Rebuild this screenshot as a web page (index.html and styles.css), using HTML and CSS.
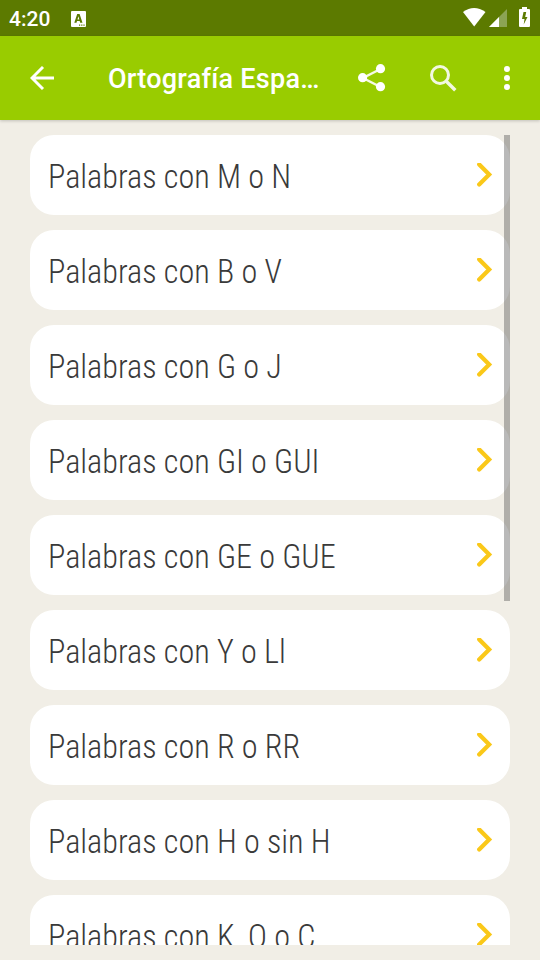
FILE: index.html
```html
<!DOCTYPE html>
<html lang="es">
<head>
<meta charset="utf-8">
<title>Ortografía Española</title>
<link rel="stylesheet" href="styles.css">
</head>
<body>
<svg class="defs" width="0" height="0">
  <symbol id="chevron" viewBox="0 0 16 24"><path d="M2.200 1.400 12.200 11.400 2.200 21.400" fill="none" stroke="#fac819" stroke-width="4.200" stroke-linecap="round"/></symbol>
</svg>
<div class="status">
  <span class="time">4:20</span>
  <svg class="note" width="15" height="16" viewBox="0 0 15 16"><path fill="#fff" d="M1 0h13a1 1 0 0 1 1 1v14a1 1 0 0 1-1 1H1a1 1 0 0 1-1-1V1a1 1 0 0 1 1-1z"/><path fill="#5c7a00" fill-rule="evenodd" d="M6.200 3h2.400l2.900 8.800H9.200L8.700 10H6l-.5 1.800H3.300zM7.400 5.200 6.500 8.400h1.800z"/><path fill="#5c7a00" d="M8 13.500h1.200v1.200H8zM10.200 13.500h1.200v1.200h-1.200zM12.400 13.500h1.200v1.200h-1.200z"/></svg>
  <svg class="sysicons" width="68" height="20" viewBox="0 0 68 20">
    <path fill="#fff" d="M0 5Q11-3 22.500 5L11.200 19.500z"/>
    <path fill="#8ca454" d="M44 2v18H26z"/>
    <path fill="#fff" d="M36 10v10H26z"/>
    <path fill="#fff" fill-rule="evenodd" d="M57 2h2V0h5v2h2a1 1 0 0 1 1 1v16a1 1 0 0 1-1 1h-9a1 1 0 0 1-1-1V3a1 1 0 0 1 1-1zM60.500 5 59 12h2.500l-.8 5.500 3.800-7.500h-2.300l1-5z"/>
  </svg>
</div>
<header class="bar">
  <svg class="back" width="24" height="24" viewBox="0 0 24 24"><path d="M13 1 2 12l11 11M2 12h22" fill="none" stroke="#fff" stroke-width="2.900"/></svg>
  <h1>Ortografía Espa…</h1>
  <svg class="share" width="28" height="28" viewBox="0 0 28 28"><path d="M22.500 5 5 14l17.500 9" fill="none" stroke="#fff" stroke-width="2.500" opacity=".9"/><g fill="#fff"><circle cx="22.500" cy="4.700" r="4.600"/><circle cx="4.600" cy="13.700" r="4.600"/><circle cx="22.500" cy="22.700" r="4.600"/></g></svg>
  <svg class="search" width="27" height="27" viewBox="0 0 27 27"><g fill="none" stroke="#fff" opacity=".88"><circle cx="10" cy="10" r="8.500" stroke-width="3"/><path d="M16.500 16.500 25.300 25.300" stroke-width="3.400"/></g></svg>
  <svg class="more" width="6" height="24" viewBox="0 0 6 24" fill="#fff"><circle cx="3" cy="3" r="3"/><circle cx="3" cy="12" r="3"/><circle cx="3" cy="21" r="3"/></svg>
</header>
<main class="list">
  <div class="row"><span>Palabras con M o N</span><svg class="chev"><use href="#chevron"/></svg></div>
  <div class="row"><span>Palabras con B o V</span><svg class="chev"><use href="#chevron"/></svg></div>
  <div class="row"><span>Palabras con G o J</span><svg class="chev"><use href="#chevron"/></svg></div>
  <div class="row"><span>Palabras con GI o GUI</span><svg class="chev"><use href="#chevron"/></svg></div>
  <div class="row"><span>Palabras con GE o GUE</span><svg class="chev"><use href="#chevron"/></svg></div>
  <div class="row"><span>Palabras con Y o Ll</span><svg class="chev"><use href="#chevron"/></svg></div>
  <div class="row"><span>Palabras con R o RR</span><svg class="chev"><use href="#chevron"/></svg></div>
  <div class="row"><span>Palabras con H o sin H</span><svg class="chev"><use href="#chevron"/></svg></div>
  <div class="row"><span>Palabras con K, Q o C</span><svg class="chev"><use href="#chevron"/></svg></div>
  <div class="thumb"></div>
</main>
</body>
</html>
```
FILE: styles.css
```css
* { box-sizing: border-box; }
body {
  margin: 0;
  height: 960px;
  overflow: hidden;
  display: flex;
  flex-direction: column;
  background: #f1eee6;
  font-family: Roboto, sans-serif;
}
svg { display: block; flex: none; }
.defs { position: absolute; }
.status {
  flex: none;
  height: 36px;
  display: flex;
  align-items: center;
  padding: 0 14px 0 9px;
  background: #5c7a00;
  color: #fff;
}
.time { width: 62px; font-size: 21px; font-weight: 500; line-height: 36px; padding-top: 1px; }
.note { margin-top: 1px; }
.sysicons { margin: -2px -5px 0 auto; }
.bar {
  flex: none;
  height: 84px;
  display: flex;
  align-items: center;
  padding-left: 30px;
  background: #99cc00;
  color: #fff;
  box-shadow: 0 1px 3px rgba(0, 0, 0, .2);
}
.bar h1 {
  margin: 2px 0 0 54px;
  width: 250px;
  font-size: 27px;
  font-weight: 500;
  letter-spacing: .25px;
  white-space: nowrap;
}
.search { margin-left: 44px; }
.more { margin-left: 47px; }
.list {
  position: relative;
  width: 480px;
  height: 810px;
  margin: 15px 0 0 30px;
  overflow: hidden;
  display: flex;
  flex-direction: column;
  gap: 15px;
}
.row {
  flex: none;
  height: 80px;
  display: flex;
  align-items: center;
  justify-content: space-between;
  padding: 0 17px 0 18px;
  border-radius: 24px;
  background: #fff;
  color: #3a3a3a;
  font-size: 34px;
  font-weight: 300;
  font-stretch: 75%;
  white-space: nowrap;
}
.row span {
  padding-top: 2px;
  transform: scaleX(.946);
  transform-origin: left center;
}
.chev { width: 16px; height: 24px; }
.thumb {
  position: absolute;
  top: 0;
  right: 0;
  width: 6px;
  height: 466px;
  background: rgba(70, 70, 70, .38);
}
```
